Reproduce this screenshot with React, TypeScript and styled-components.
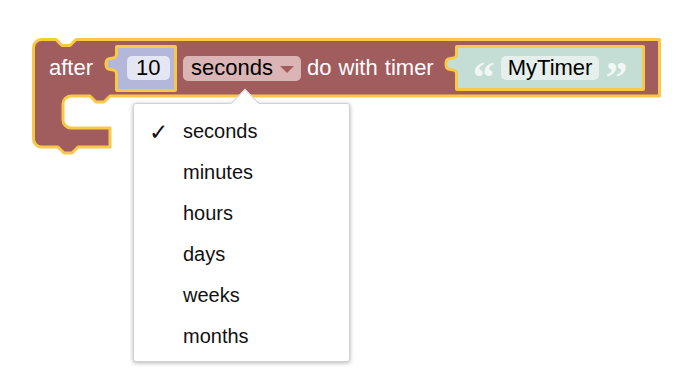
import * as React from "react";
import styled, { createGlobalStyle } from "styled-components";

const GlobalStyle = createGlobalStyle`
  html, body {
    margin: 0;
    padding: 0;
    background: #ffffff;
  }
  body {
    font-family: "Liberation Sans", Arial, sans-serif;
  }
`;

const colors = {
  block: "#a15c5d",
  outline: "#f8c946",
  number: "#b3b7da",
  numberField: "#e5e6f3",
  text: "#c4ddd5",
  textField: "#e5efeb",
  dropdown: "#dbb5b5",
};

const Page = styled.div`
  width: 690px;
  height: 386px;
  padding: 36px 0 0 30px;
  box-sizing: border-box;
  overflow: hidden;
`;

const BlockArea = styled.div`
  position: relative;
  width: 636px;
  height: 124px;
`;

const Shape = styled.svg`
  position: absolute;
  left: 0;
  top: 0;
`;

const Row = styled.div`
  position: relative;
  display: flex;
  align-items: center;
  height: 64px;
  padding-left: 19px;
  font-size: 22px;
`;

const Label = styled.span<{ ml?: number }>`
  color: #ffffff;
  margin-left: ${(p) => p.ml || 0}px;
  white-space: nowrap;
  word-spacing: 1px;
`;

type SlotProps = { bg: string; w: number; h: number; ml: number };
const Slot = styled.div<SlotProps>`
  position: relative;
  box-sizing: border-box;
  display: flex;
  align-items: center;
  width: ${(p) => p.w}px;
  height: ${(p) => p.h}px;
  margin-left: ${(p) => p.ml}px;
  background: ${(p) => p.bg};
  border: 3px solid ${colors.outline};
  border-radius: 2px;
`;

const Tab = styled.svg`
  position: absolute;
  left: -15px;
  top: 3px;
`;

const Field = styled.span<{ bg: string; ml: number; pad: number }>`
  display: inline-flex;
  align-items: center;
  height: 24px;
  margin-left: ${(p) => p.ml}px;
  padding: 0 ${(p) => p.pad}px;
  background: ${(p) => p.bg};
  border-radius: 5px;
  color: #000000;
  line-height: 24px;
`;

const Dropdown = styled.span`
  display: inline-flex;
  align-items: center;
  gap: 7px;
  height: 25px;
  margin-left: 6px;
  padding: 0 7px 0 8px;
  background: ${colors.dropdown};
  border-radius: 5px;
  color: #000000;
`;

const Caret = styled.span`
  width: 0;
  height: 0;
  margin-top: 2px;
  border-left: 7px solid transparent;
  border-right: 7px solid transparent;
  border-top: 7px solid ${colors.block};
`;

const Quote = styled.span<{ ml: number }>`
  margin-left: ${(p) => p.ml}px;
  color: #f1f7f5;
  font-family: "Liberation Serif", "Times New Roman", serif;
  font-weight: bold;
  font-size: 44px;
  line-height: 44px;
  transform: translateY(10px);
`;

const Menu = styled.div`
  position: absolute;
  left: 103px;
  top: 67px;
  width: 217px;
  height: 259px;
  box-sizing: border-box;
  padding-top: 7px;
  background: #ffffff;
  border: 1px solid #d2d2d2;
  border-radius: 3px;
  box-shadow: 0 1px 4px rgba(0, 0, 0, 0.3);
  font-size: 20px;

  &::before {
    content: "";
    position: absolute;
    left: 101px;
    top: -11px;
    width: 19px;
    height: 19px;
    background: #ffffff;
    border-top: 1px solid #d2d2d2;
    border-left: 1px solid #d2d2d2;
    transform: rotate(45deg);
  }
`;

const Item = styled.div`
  position: relative;
  display: flex;
  align-items: center;
  height: 41px;
  color: #111111;
`;

const Check = styled.span`
  width: 34px;
  padding-left: 15px;
  font-family: "DejaVu Sans", sans-serif;
  font-size: 23px;
  color: #111111;
`;

const units = ["seconds", "minutes", "hours", "days", "weeks", "months"];

const PuzzleTab: React.FC<{ fill: string }> = ({ fill }) => (
  <Tab width="16" height="27" viewBox="0 0 16 27">
    <path
      d="M13.5 0 V3 C13.5 11 3 3 3 13 C3 23 13.5 15 13.5 23 V27 H16 V0 Z"
      fill={fill}
    />
    <path
      d="M13.5 0 V3 C13.5 11 3 3 3 13 C3 23 13.5 15 13.5 23 V27"
      fill="none"
      stroke={colors.outline}
      strokeWidth="3"
    />
  </Tab>
);

const BlockOutline = () => (
  <Shape width="636" height="124" viewBox="0 0 636 124">
    <path
      d="M3.5 11.5 A8 8 0 0 1 11.5 3.5 H26 l6 6 h8 l6 -6 H629.5 V60 H80 l-6 6 h-8 l-6 -6 H41 A8 8 0 0 0 33 68 V84 A8 8 0 0 0 41 92 H80 V111 H48 l-6 6 h-8 l-6 -6 H11.5 A8 8 0 0 1 3.5 103 Z"
      fill={colors.block}
      stroke={colors.outline}
      strokeWidth="3"
      strokeLinejoin="round"
    />
  </Shape>
);

export default function App() {
  return (
    <>
      <GlobalStyle />
      <Page>
        <BlockArea>
          <BlockOutline />
          <Row>
            <Label>after</Label>
            <Slot bg={colors.number} w={62} h={47} ml={22}>
              <PuzzleTab fill={colors.number} />
              <Field bg={colors.numberField} ml={9} pad={9}>
                10
              </Field>
            </Slot>
            <Dropdown>
              seconds
              <Caret />
            </Dropdown>
            <Label ml={6}>do with timer</Label>
            <Slot bg={colors.text} w={190} h={46} ml={21}>
              <PuzzleTab fill={colors.text} />
              <Quote ml={15}>“</Quote>
              <Field bg={colors.textField} ml={6} pad={7}>
                MyTimer
              </Field>
              <Quote ml={6}>”</Quote>
            </Slot>
          </Row>
          <Menu>
            {units.map((u, i) => (
              <Item key={u}>
                <Check>{i === 0 ? "✓" : ""}</Check>
                {u}
              </Item>
            ))}
          </Menu>
        </BlockArea>
      </Page>
    </>
  );
}
